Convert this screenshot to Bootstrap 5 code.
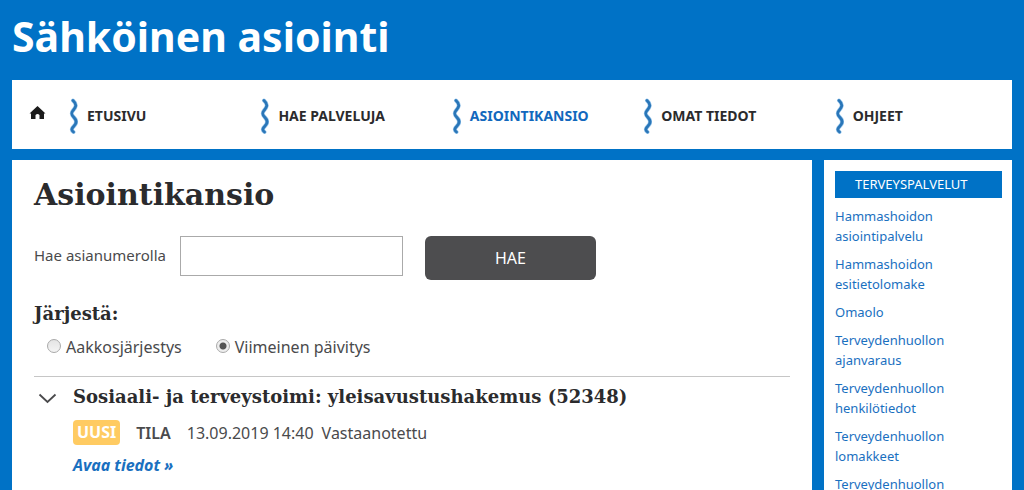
<!DOCTYPE html>
<html lang="fi">
<head>
<meta charset="utf-8">
<meta name="viewport" content="width=device-width, initial-scale=1">
<title>Sähköinen asiointi</title>
<link href="https://cdn.jsdelivr.net/npm/bootstrap@5.3.0/dist/css/bootstrap.min.css" rel="stylesheet">
<style>
body{background:#0072c6;color:#4a4a4c;font:16px/24px "Noto Sans","Open Sans",sans-serif}
a{text-decoration:none;color:#1a70bf}
.page-gap{gap:12px;padding-top:11px}
.site-title{font:700 41px/48px "Noto Sans",sans-serif;color:#fff;padding:12px 0 20px}
.main-nav{height:69px;background:#fff}
.home-link{width:43px;padding-left:17px;margin-top:-6px}
.nav-entry{flex:1 1 0;padding:3px 0 0 14px;gap:9px;font:700 14px/20px "Noto Sans",sans-serif;color:#2b2b2d}
.nav-entry.active{color:#1268bd}
.content-pane{padding:16px 22px 20px}
.slab{font-family:"DejaVu Serif",serif;font-weight:700;color:#2b2b2d;margin:0}
h1.slab{font-size:30px;line-height:38px}
h2.slab{font-size:18px;line-height:24px}
.search-form{padding-top:22px}
.search-label{font-size:15px;padding-top:7px}
.search-input{width:223px;height:40px;border:1px solid #aaa;border-radius:0;margin:0 22px 0 14px}
.search-btn{width:171px;height:44px;border-radius:6px;background:#4d4d4f;color:#fff;font-size:16px;padding:0}
.search-btn:hover{background:#3c3c3e;color:#fff}
.sort-title{margin-top:22px!important}
.sort-radio{appearance:none;width:14px;height:14px;margin:0 5px 3px 0;border:1px solid #aaa;border-radius:50%;background:linear-gradient(#e4e4e4,#f4f4f4)}
.sort-radio:checked{background:radial-gradient(circle,#555 0 3px,#eee 4px)}
.sort-row{padding:9px 0 17px 13px;gap:34px}
.case-item{border-top:1px solid #c6c6c6;padding:8px 0 0 4px;gap:16px}
.new-badge{background:#ffcb62;color:#fff;font-weight:700;border-radius:4px;padding:0 4px;margin-right:16px;line-height:25px}
.case-status{margin-top:11px}
.side-pane{width:188px;padding:11px 10px 12px 11px}
.side-title{background:#0072c6;color:#fff;font:400 13px/27px "Noto Sans",sans-serif;padding-left:20px;margin:0 0 8px}
.side-list{font-size:13px;line-height:20px;gap:8px}
.side-list li{max-width:130px}
</style>
</head>
<body>
<svg width="0" height="0" class="d-none"><symbol id="wave" viewBox="0 0 9 36"><path d="M4 2.500C9 7 6 10 4 12.500S2 16.500 5 19.500s2.500 6 0 8.500-3 4-.5 6" fill="none" stroke="#9cc8ec" stroke-width="4" stroke-linecap="round"/><path d="M4 2.500C9 7 6 10 4 12.500S2 16.500 5 19.500s2.500 6 0 8.500-3 4-.5 6" fill="none" stroke="#2a76b8" stroke-width="2.800" stroke-linecap="round"/></symbol></svg>
<div class="container-fluid px-2 mx-auto">
<div class="px-1">
<header><div class="site-title">Sähköinen asiointi</div>
<nav class="main-nav d-flex align-items-center" aria-label="Päävalikko">
<a href="#" class="home-link" aria-label="Etusivu"><svg width="17" height="14" viewBox="0 0 17 14"><path d="M8.500 0 16.500 7.500H15V13H10.500V9Q8.500 7 6.500 9V13H2V7.500H.5Z" fill="#1c1c1c"/></svg></a>
<a href="#" class="nav-entry d-flex align-items-center"><svg width="9" height="36"><use href="#wave"/></svg>ETUSIVU</a>
<a href="#" class="nav-entry d-flex align-items-center"><svg width="9" height="36"><use href="#wave"/></svg>HAE PALVELUJA</a>
<a href="#" class="nav-entry active d-flex align-items-center" aria-current="page"><svg width="9" height="36"><use href="#wave"/></svg>ASIOINTIKANSIO</a>
<a href="#" class="nav-entry d-flex align-items-center"><svg width="9" height="36"><use href="#wave"/></svg>OMAT TIEDOT</a>
<a href="#" class="nav-entry d-flex align-items-center"><svg width="9" height="36"><use href="#wave"/></svg>OHJEET</a>
</nav></header>
<div class="d-flex page-gap">
<main class="content-pane bg-white flex-grow-1">
<h1 class="slab">Asiointikansio</h1>
<form class="search-form">
<div class="d-flex align-items-start">
<label for="num" class="search-label">Hae asianumerolla</label>
<input id="num" type="text" class="search-input">
<button type="button" class="btn search-btn">HAE</button>
</div>
<h2 class="slab sort-title">Järjestä:</h2>
<div class="sort-row d-flex">
<div class="d-flex align-items-center"><input class="sort-radio" type="radio" name="sort" id="abc"><label for="abc">Aakkosjärjestys</label></div>
<div class="d-flex align-items-center"><input class="sort-radio" type="radio" name="sort" id="upd" checked><label for="upd">Viimeinen päivitys</label></div>
</div>
</form>
<article class="case-item d-flex">
<svg class="flex-shrink-0 mt-2" width="19" height="12" viewBox="0 0 19 12"><path d="M1.500 1.500 9.500 9 17.500 1.500" fill="none" stroke="#4a4a4c" stroke-width="1.800"/></svg>
<div>
<h2 class="slab">Sosiaali- ja terveystoimi: yleisavustushakemus (52348)</h2>
<div class="case-status d-flex align-items-center"><span class="new-badge">UUSI</span><strong class="fw-semibold me-3">TILA</strong><time datetime="2019-09-13T14:40">13.09.2019 14:40</time><span class="ms-2">Vastaanotettu</span></div>
<a href="#" class="d-inline-block fst-italic fw-bold mt-2">Avaa tiedot »</a>
</div>
</article>
</main>
<aside class="side-pane bg-white flex-shrink-0">
<h2 class="side-title">TERVEYSPALVELUT</h2>
<ul class="side-list list-unstyled d-flex flex-column mb-0">
<li><a href="#">Hammashoidon asiointipalvelu</a></li>
<li><a href="#">Hammashoidon esitietolomake</a></li>
<li><a href="#">Omaolo</a></li>
<li><a href="#">Terveydenhuollon ajanvaraus</a></li>
<li><a href="#">Terveydenhuollon henkilötiedot</a></li>
<li><a href="#">Terveydenhuollon lomakkeet</a></li>
<li><a href="#">Terveydenhuollon</a></li>
</ul>
</aside>
</div>
</div>
</div>
</body>
</html>
